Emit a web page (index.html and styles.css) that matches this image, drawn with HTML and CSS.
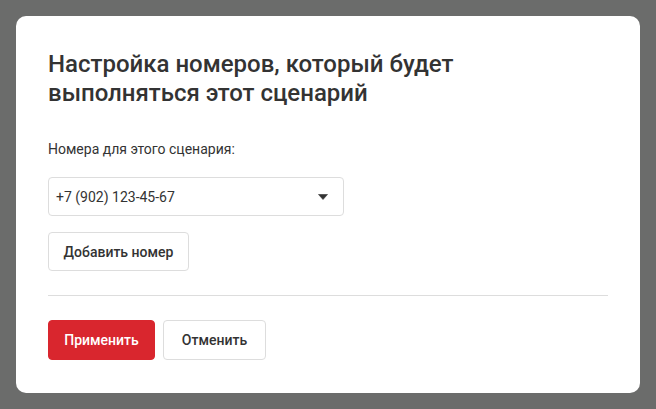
FILE: index.html
```html
<!DOCTYPE html>
<html lang="ru">
<head>
<meta charset="utf-8">
<link rel="stylesheet" href="styles.css">
</head>
<body>
<div class="overlay">
  <div class="modal">
    <h1 class="title">Настройка номеров, который будет выполняться этот сценарий</h1>
    <div class="label">Номера для этого сценария:</div>
    <div class="select">
      <span class="select-value">+7 (902) 123-45-67</span>
      <svg class="caret" width="10" height="6" viewBox="0 0 10 6"><path d="M0.5 0.5h9L5 5.5z" fill="#333" stroke="#333" stroke-width="0.6" stroke-linejoin="round"/></svg>
    </div>
    <button class="btn btn-outline add">Добавить номер</button>
    <hr class="divider">
    <div class="actions">
      <button class="btn btn-primary">Применить</button>
      <button class="btn btn-outline cancel">Отменить</button>
    </div>
  </div>
</div>
</body>
</html>
```

FILE: styles.css
```css
* { box-sizing: border-box; }
html, body { margin: 0; padding: 0; }
body {
  background: #6b6c6b;
  font-family: Roboto, "Noto Sans", sans-serif;
  color: #333;
}
.overlay {
  padding: 16px;
  height: 409px;
}
.modal {
  background: #fff;
  border-radius: 10px;
  padding: 34px 32px 32px 32px;
  height: 377px;
  display: flex;
  flex-direction: column;
  align-items: flex-start;
}
.title {
  margin: 0;
  font-size: 24px;
  font-weight: 500;
  line-height: 29px;
  color: #333;
  width: 430px;
}
.label {
  margin-top: 31px;
  font-size: 14px;
  line-height: 20px;
  color: #333;
}
.select {
  margin-top: 18px;
  width: 296px;
  height: 39px;
  border: 1px solid #ddd;
  border-radius: 4px;
  display: flex;
  align-items: center;
  justify-content: space-between;
  padding: 0 15px 0 7px;
  font-size: 14px;
}
.btn {
  font-family: inherit;
  font-size: 14px;
  font-weight: 500;
  height: 40px;
  border-radius: 4px;
  padding: 0 16px;
  cursor: pointer;
}
.btn-outline {
  background: #fff;
  border: 1px solid #ddd;
  color: #333;
}
.btn-primary {
  background: #d9262e;
  border: 1px solid #d9262e;
  color: #fff;
  width: 107px;
  padding: 0;
}
.cancel {
  width: 103px;
  padding: 0;
}
.add {
  margin-top: 16px;
  height: 39px;
  width: 141px;
  padding: 0;
}
.divider {
  align-self: stretch;
  border: 0;
  border-top: 1px solid #ddd;
  margin: 24px 0 0;
}
.actions {
  margin-top: 24px;
  display: flex;
  gap: 8px;
}
```
